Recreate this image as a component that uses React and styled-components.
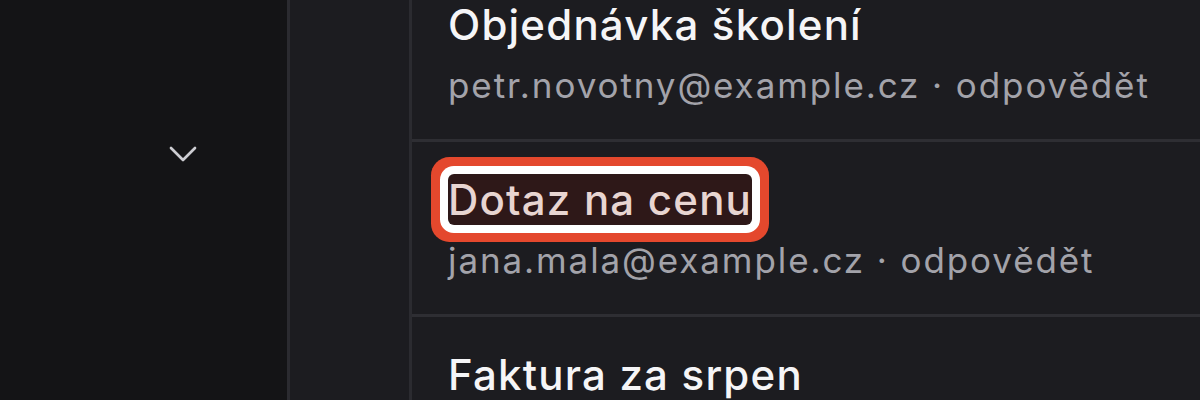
import React from 'react';
import styled, { createGlobalStyle } from 'styled-components';
import { ChevronDown } from 'lucide-react';

const GlobalStyle = createGlobalStyle`
  html, body {
    margin: 0;
    padding: 0;
    background: #131316;
  }
  body {
    font-family: Inter, "Noto Sans", "Liberation Sans", sans-serif;
  }
`;

const Shell = styled.div`
  display: flex;
  width: 1200px;
  height: 400px;
  overflow: hidden;
  background: #131316;
`;

const Sidebar = styled.aside`
  width: 290px;
  flex-shrink: 0;
  background: #141416;
  border-right: 3px solid #2b2b30;
  display: flex;
  flex-direction: column;
  padding-top: 130px;
  box-sizing: border-box;
`;

const NavToggle = styled.div`
  display: flex;
  justify-content: flex-end;
  padding-right: 80px;
  color: #cdcdd2;
`;

const Rail = styled.div`
  width: 122px;
  flex-shrink: 0;
  box-sizing: border-box;
  background: #1c1c20;
  border-right: 3px solid #2b2b30;
`;

const List = styled.div`
  flex: 1;
  background: #1c1c20;
  margin-top: -33px;
`;

const Row = styled.div`
  height: 175px;
  box-sizing: border-box;
  border-bottom: 3px solid #2e2e33;
  padding: 35px 0 0 36px;
`;

const Title = styled.div`
  font-size: 42px;
  line-height: 46px;
  font-weight: 500;
  letter-spacing: 1.2px;
  color: #f5f5f7;
  white-space: nowrap;
`;

const Mark = styled.span`
  display: inline-block;
  background: #2e1818;
  color: #e8d5d1;
  border-radius: 6px;
  line-height: 51px;
  margin: -3px 0;
  box-shadow: 0 0 0 8px #ffffff, 0 0 0 17px #e4482d;
`;

const Meta = styled.div`
  margin-top: 17px;
  font-size: 35px;
  line-height: 40px;
  letter-spacing: 1.9px;
  color: #a3a3aa;
  white-space: nowrap;
`;

const mails = [
  { subject: 'Objednávka školení', from: 'petr.novotny@example.cz' },
  { subject: 'Dotaz na cenu', from: 'jana.mala@example.cz', marked: true },
  { subject: 'Faktura za srpen', from: 'ucetni@example.cz' }
];

export default function App() {
  return (
    <Shell>
      <GlobalStyle />
      <Sidebar>
        <NavToggle>
          <ChevronDown size={48} strokeWidth={1.35} />
        </NavToggle>
      </Sidebar>
      <Rail />
      <List>
        {mails.map(mail => (
          <Row key={mail.subject}>
            <Title>{mail.marked ? <Mark>{mail.subject}</Mark> : mail.subject}</Title>
            <Meta>{mail.from} · odpovědět</Meta>
          </Row>
        ))}
      </List>
    </Shell>
  );
}
